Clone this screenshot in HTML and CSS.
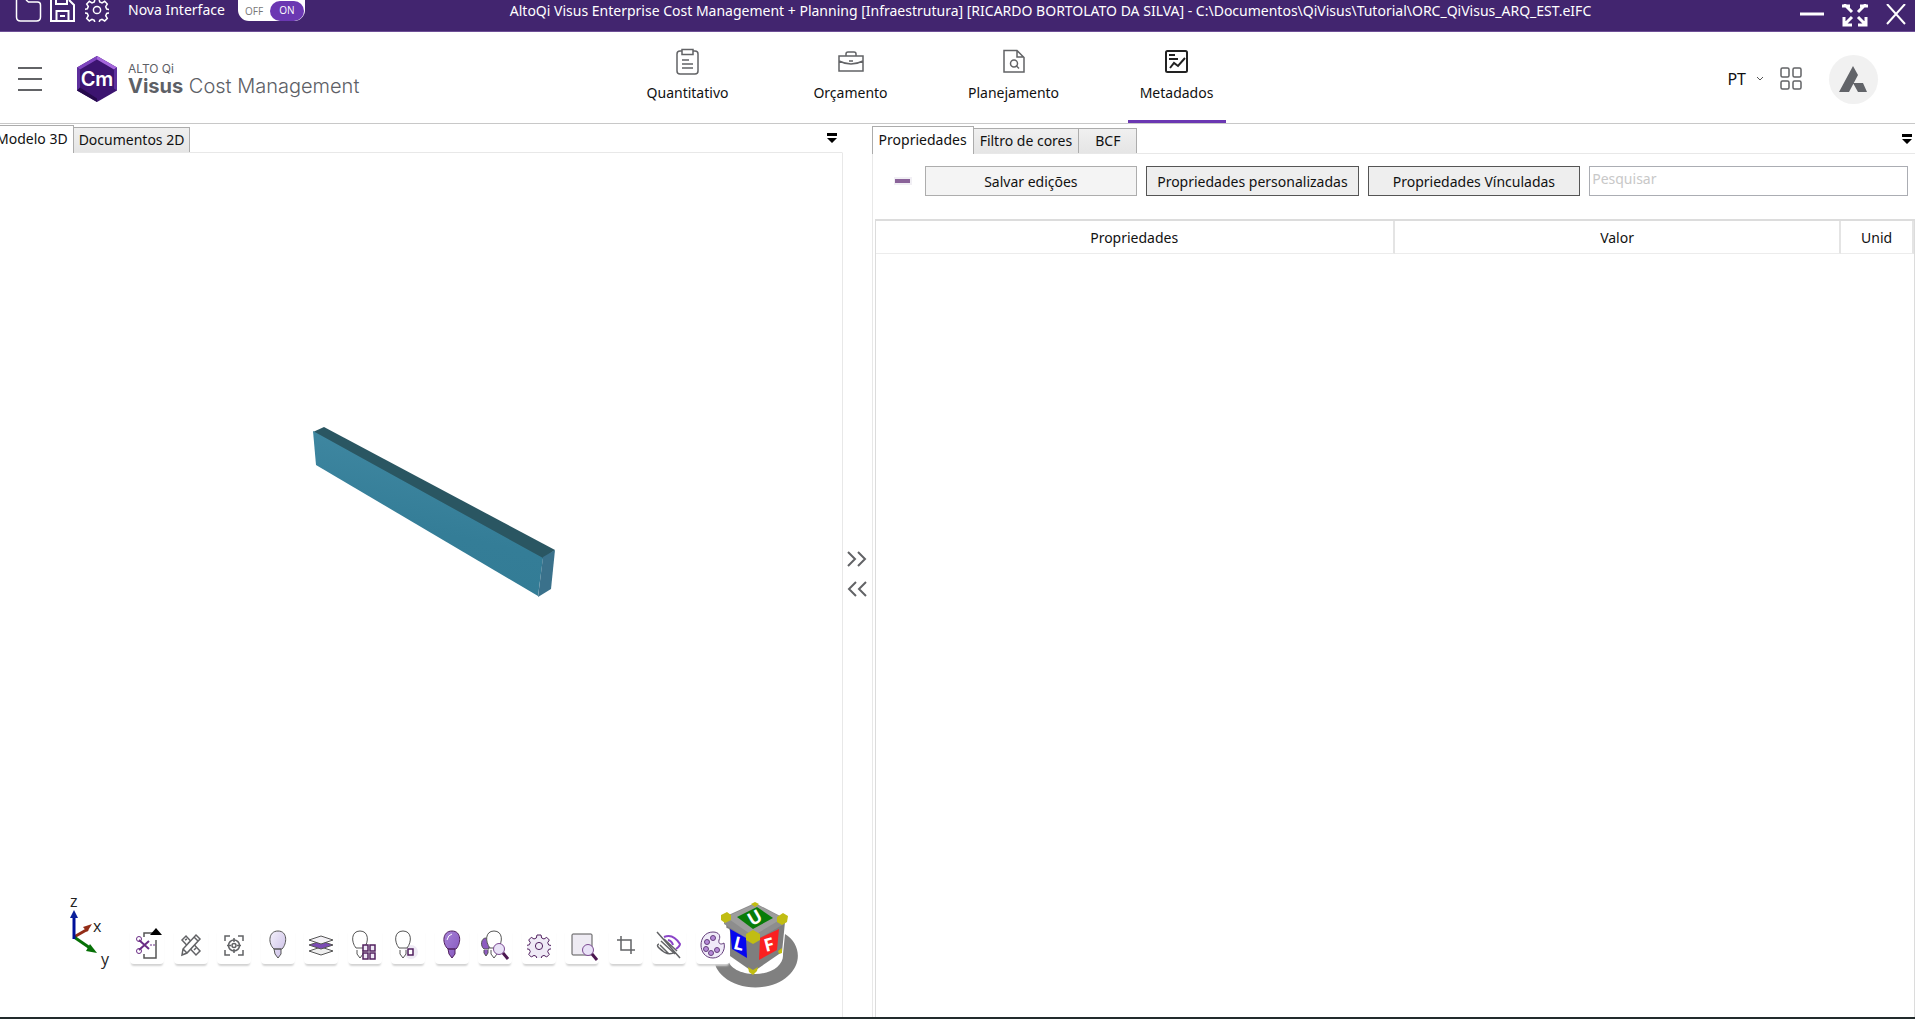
FILE: index.html
```html
<!DOCTYPE html>
<html lang="pt">
<head>
<meta charset="utf-8">
<title>AltoQi Visus Cost Management</title>
<link rel="stylesheet" href="styles.css">
</head>
<body>
<svg class="defs" aria-hidden="true">
  <defs>
    <linearGradient id="lilac" x1="0" y1="0" x2="1" y2="1"><stop offset="0" stop-color="#f4f1fb"/><stop offset="1" stop-color="#c9bce6"/></linearGradient>
    <linearGradient id="violet" x1="0" y1="0" x2="1" y2="1"><stop offset="0" stop-color="#a884d8"/><stop offset="1" stop-color="#8454bd"/></linearGradient>
    <linearGradient id="side" x1="0" y1="1" x2="0.3" y2="0"><stop offset="0" stop-color="#327b94"/><stop offset="0.5" stop-color="#347d97"/><stop offset="1" stop-color="#4088a2"/></linearGradient>
    <symbol id="gear" viewBox="0 0 24 24">
      <path d="M10 1.500h4l.7 3 2.300 1 2.700-1.700 2.600 2.700-1.600 2.700 1 2.300 3 .6v-.2 3.300l-3 .7-1 2.300 1.600 2.700-2.600 2.600-2.700-1.600-2.300 1-.7 3h-4l-.7-3-2.300-1-2.700 1.600-2.600-2.600 1.600-2.700-1-2.300-3-.7v-3.200l3-.7 1-2.300L1.700 6.500l2.600-2.700L7 5.500l2.300-1z"/><circle cx="12" cy="12.500" r="3.600"/>
    </symbol>
    <symbol id="menu" viewBox="0 0 12 11"><path d="M1 0h10v3H1zM1 5h10L6 10z" fill="#000"/></symbol>
  </defs>
</svg>

<header class="titlebar">
  <div class="quick">
    <button class="plain" aria-label="Abrir"><svg width="28" height="24" class="white"><path d="M1.500 0v17q0 4 4 4h16q4 0 4-4V5q0-3-3-3h-9L11 0"/></svg></button>
    <button class="plain" aria-label="Salvar"><svg width="28" height="24" class="white thick"><path d="M1 0v21h23V5l-5-5M6 0v4h11V0M6.500 21v-10h12v10M10 16h5"/></svg></button>
    <button class="plain" aria-label="Opções"><svg width="26" height="24" class="white"><use href="#gear" x="0" y="-3" width="24" height="25"/></svg></button>
    <label class="switch-row" for="nova">Nova Interface</label>
    <span class="switch"><input type="checkbox" id="nova" checked><span class="off">OFF</span><span class="on">ON</span></span>
  </div>
  <div class="title">AltoQi Visus Enterprise Cost Management + Planning [Infraestrutura] [RICARDO BORTOLATO DA SILVA] - C:\Documentos\QiVisus\Tutorial\ORC_QiVisus_ARQ_EST.eIFC</div>
  <div class="window">
    <button class="plain" aria-label="Minimizar"><svg width="24" height="24"><path d="M0 10h24" stroke="#fff" stroke-width="3"/></svg></button>
    <button class="plain" aria-label="Restaurar"><svg width="26" height="24" class="white arrows"><path d="M2 0l8 8M24 0l-8 8M3 20l7-7M23 20l-7-7M0 2h8M26 2h-8M2 13v8h8M24 13v8h-8"/></svg></button>
    <button class="plain" aria-label="Fechar"><svg width="20" height="24" class="white thick"><path d="M1 0l18 20M19 0L1 20"/></svg></button>
  </div>
</header>

<div class="header">
  <div class="brand">
    <button class="plain" aria-label="Menu"><svg width="24" height="26"><path d="M0 2h24M0 13h24M0 24h24" stroke="#626366" stroke-width="2"/></svg></button>
    <div class="hex"><svg width="40" height="46" viewBox="0 0 40 46"><path d="M20 0l20 11.500v23L20 46 0 34.500v-23z" fill="#3c1470"/><path d="M20 0l20 11.500-3 2L20 3.500z" fill="#a566dc"/><path d="M20 0v3.500l-17 10-3-2z" fill="#7f45c0"/><path d="M0 11.500l3 2v19l-3 2z" fill="#5d2f9c"/><path d="M40 11.500l-3 2v19l3 2z" fill="#5d2f9c"/><path d="M0 34.500l3-3 17 11V46z" fill="#260a4c"/></svg><span>Cm</span></div>
    <div class="name"><small>ALTO Qi</small><span><b>Visus</b> Cost Management</span></div>
  </div>
  <nav class="nav">
    <a href="#"><svg width="28" height="28" class="gray fine"><path d="M8 3H6Q3 3 3 6v17q0 3 3 3h15q3 0 3-3V6q0-3-3-3h-2M8 1.500h11v5H8zM8 12h7M8 16h11M8 20h11"/></svg>Quantitativo</a>
    <a href="#"><svg width="28" height="28" class="gray fine"><path d="M2 8h24v15H2zM9 8V6q0-2 2-2h6q2 0 2 2v2M2 13q12 6 24 0M12 13h4"/></svg>Orçamento</a>
    <a href="#"><svg width="28" height="28" class="gray fine"><path d="M4 2.500h13l7 7V24H4zM17 2.500V9h7"/><circle cx="14" cy="15.500" r="3.500"/><path d="M16 17.500l3 3"/></svg>Planejamento</a>
    <a href="#" class="active"><svg width="28" height="28" class="dark"><rect x="3" y="3" width="21" height="21" rx="1.500"/><path d="M6 7h6M6 11h9M7 20l4-5 4 3 7-8"/></svg>Metadados</a>
  </nav>
  <div class="user">
    <button class="plain lang">PT <svg width="8" height="6"><path d="M1 1l3 3 3-3" fill="none" stroke="#555"/></svg></button>
    <button class="plain" aria-label="Aplicativos"><svg width="22" height="24" class="gray fine"><rect x="1" y="1" width="8" height="9" rx="1.500"/><rect x="13" y="1" width="8" height="9" rx="1.500"/><rect x="1" y="14" width="8" height="8" rx="1.500"/><rect x="13" y="14" width="8" height="8" rx="1.500"/></svg></button>
    <button class="plain avatar" aria-label="Conta"><svg width="28" height="26"><path d="M14 0l5 9-9 17H0zM14 17h10l4 9h-9z" fill="#626469"/></svg></button>
  </div>
</div>

<main class="work">
  <section class="left">
    <div class="tabs shifted">
      <button class="tab current">Modelo 3D</button><button class="tab">Documentos 2D</button>
      <button class="plain more" aria-label="Mais"><svg width="12" height="11"><use href="#menu"/></svg></button>
    </div>
    <div class="viewport">
      <svg class="beam" width="245" height="172" viewBox="0 0 245 172">
        <path d="M1 6L12 1l231 123-12 9z" fill="#2a5662"/>
        <path d="M1 5l230 127-5 38L4 39z" fill="url(#side)"/>
        <path d="M231 131l12-7-4 39-13 8z" fill="#3a718b"/>
      </svg>
      <div class="hud">
        <svg class="axis" width="48" height="80" viewBox="0 0 48 80">
          <path d="M8 44l14-8" stroke="#932d17" stroke-width="3"/><path d="M17 34l9-3-5 8z" fill="#932d17"/>
          <path d="M8 44l16 11" stroke="#067006" stroke-width="3"/><path d="M24 51l-4 7 11 2z" fill="#067006"/>
          <path d="M8 46V24" stroke="#00109a" stroke-width="3"/><path d="M8 17l4 8H4z" fill="#0b1f9a"/>
          <text x="4" y="14">z</text><text x="27" y="39">x</text><text x="35" y="72">y</text>
        </svg>
        <div class="tools">
          <button aria-label="Corte"><svg viewBox="0 0 34 36"><g fill="none"><path d="M14 9V5h9M26 12v18H14v-4" stroke="#555" stroke-width="1.500"/><path d="M9 12l10 9M9 22l10-9" stroke="#6b2d86" stroke-width="2"/><circle cx="9" cy="11" r="2.500" stroke="#6b2d86"/><circle cx="9" cy="23" r="2.500" stroke="#6b2d86"/><path d="M20 17h6" stroke="#6b2d86" stroke-dasharray="2 1"/></g><path d="M26 0l6 7H20z" fill="#000"/></svg></button>
          <button aria-label="Medir"><svg viewBox="0 0 34 36" class="gray fine"><path d="M8 12l4-4 14 15-4 4zM11 12l2-1M14 15l2-1M20 22l2-2"/><path d="M22 7l4 4-13 14-5 2 1-6zM20 9l4 4M9 21l4 4" fill="#fff"/></svg></button>
          <button aria-label="Centralizar"><svg viewBox="0 0 34 36" class="gray fine"><path d="M8 13V8h5M21 8h5v5M26 22v5h-5M13 27H8v-5M17 10v4M17 21v4M10 17.500h4M20 17.500h4"/><circle cx="17" cy="17.500" r="5.500"/><circle cx="17" cy="17.500" r="2"/></svg></button>
          <button aria-label="Mostrar"><svg viewBox="0 0 34 36" class="lamp"><path d="M13 21h7v5l-3 4-3-4zM17 3c10 0 9 13 4 18h-8C7 16 7 3 17 3z" fill="url(#lilac)"/></svg></button>
          <button aria-label="Camadas"><svg viewBox="0 0 34 36" class="lamp"><path d="M5 23l12-4 12 4-12 4z" fill="#eee"/><path d="M5 17l12-4 12 4-12 4z" fill="#7b4ab4"/><path d="M5 12l12-4 12 4-12 4z" fill="#f3f1f6"/></svg></button>
          <button aria-label="Mostrar grupo"><svg viewBox="0 0 34 36" class="lamp"><path d="M9 22v4l3 4 3-4v-4M12 3c9 0 9 11 4 17H8C3 14 3 3 12 3z" fill="#fff"/><path d="M15 17h5v6h-5zM22 17h5v6h-5zM15 25h5v6h-5zM22 25h5v6h-5z" fill="#eee7f6" stroke="#51205f" stroke-width="1.500"/></svg></button>
          <button aria-label="Mostrar item"><svg viewBox="0 0 34 36" class="lamp"><circle cx="20" cy="24" r="7" fill="#eeeaf4" stroke="none"/><path d="M9 22v4l3 4 3-4v-4M12 3c9 0 9 11 4 17H8C3 14 3 3 12 3z" fill="#fff"/><path d="M17 21h5v6h-5z" fill="#fff" stroke="#51205f" stroke-width="1.500"/></svg></button>
          <button aria-label="Destacar"><svg viewBox="0 0 34 36" class="lamp plum"><path d="M13 21h7v5l-3 4-3-4zM17 3c10 0 9 13 4 18h-8C7 16 7 3 17 3z" fill="url(#violet)"/><path d="M12 12q1-5 5-6" stroke="#fff"/></svg></button>
          <button aria-label="Localizar"><svg viewBox="0 0 34 36" class="lamp"><path d="M6 22v3l2 3 2-3v-3M8 10c-5 0-6 8-2 11h5V10z" fill="#8d5bc0"/><path d="M13 22v4l3 4 3-4v-4M16 3c9 0 9 11 4 17h-8C7 14 7 3 16 3z" fill="#fff"/><circle cx="21" cy="21" r="5.500" fill="#e9e2f7" stroke="#7b4a92"/><path d="M25 25l5 6" stroke="#4b1750" stroke-width="3"/></svg></button>
          <button aria-label="Configurar"><svg viewBox="0 0 34 36" class="lamp plum pale"><use href="#gear" x="5" y="5" width="24" height="25"/></svg></button>
          <button aria-label="Zoom de área"><svg viewBox="0 0 34 36" class="lamp"><rect x="7" y="6" width="20" height="21" rx="1" fill="#eeebf3"/><circle cx="23" cy="22" r="5.500" fill="#e9e2f7" stroke="#7b4a92"/><path d="M27 26l5 6" stroke="#4b1750" stroke-width="3"/></svg></button>
          <button aria-label="Recortar"><svg viewBox="0 0 34 36" class="gray fine"><path d="M12 8v14h14M8 12h14v14"/></svg></button>
          <button aria-label="Ocultar"><svg viewBox="0 0 34 36" class="gray fine"><path d="M5 4l23 26M7 16q-3 1 0 4 9 9 16 4M9 13l14 13M8 17l9 9M12 11l13 12M6 19l5 4"/><path d="M12 9q9-4 16 7 0 2-4 5M16 12q4 1 5 5" stroke="#8b45c8" stroke-width="2"/></svg></button>
          <button aria-label="Cores"><svg viewBox="0 0 34 36" class="lamp"><path d="M17 4c6 0 8 4 6 8-1 4 2 5 5 3 2 8-4 15-11 15C1 30 1 4 17 4z" fill="#efeaf8" stroke="#65407c"/><g fill="#b58ad8" stroke="#65407c"><circle cx="11" cy="14" r="2.500"/><circle cx="17" cy="10" r="2.500"/><circle cx="10" cy="21" r="2.500"/><circle cx="15" cy="25" r="2.500"/><circle cx="21" cy="22" r="2.500"/></g></svg></button>
        </div>
        <svg class="cube" width="88" height="88" viewBox="0 0 88 88">
          <path d="M73 34C88 43 91 63 76 76 60 91 28 91 12 77 5 71 2 65 2 56l14 3c1 9 13 15 27 15 17 0 29-9 28-20z" fill="#808080"/>
          <path d="M12 18l2 6 4 32 23 16 29-20 3-30-2-4z" fill="#7e7e7e"/>
          <path d="M12 17L43 3l29 15v6L41 42 12 24z" fill="#8d8d8d"/>
          <path d="M14 17L43 4l28 14-30 18z" fill="#9d9d9d"/>
          <path d="M45 7l16 11-20 11-16-12z" fill="#087c08"/>
          <path d="M18 29l16 9 1 20-15-9z" fill="#0606ef"/>
          <path d="M48 38l19-9-2 21-18 10z" fill="#fa2020"/>
          <g class="faces"><text x="43" y="24" transform="rotate(-30 43 18)">U</text><text x="27" y="50" transform="rotate(14 27 44)">L</text><text x="57" y="51" transform="rotate(-14 57 45)">F</text></g>
          <g fill="#c1bd12"><path d="M9 15l6-3 4 3v5l-6 3-4-3zM39 4l4-2 4 2-4 3zM65 17l6-4 5 3-1 6-5 3-5-3zM34 34l7-4 7 4v6l-7 4-7-4zM36 67l5 3 5-3-1 4-4 4-4-3zM66 51l4-3v5l-3 1z"/></g>
        </svg>
      </div>
    </div>
  </section>

  <div class="splitter">
    <button class="plain" aria-label="Expandir"><svg width="20" height="16" class="gray"><path d="M1 1l7 7-7 7M11 1l7 7-7 7"/></svg></button>
    <button class="plain" aria-label="Recolher"><svg width="20" height="16" class="gray"><path d="M9 1L2 8l7 7M19 1l-7 7 7 7"/></svg></button>
  </div>

  <section class="right">
    <div class="tabs">
      <button class="tab current">Propriedades</button><button class="tab">Filtro de cores</button><button class="tab wide">BCF</button>
      <button class="plain more" aria-label="Mais"><svg width="12" height="11"><use href="#menu"/></svg></button>
    </div>
    <div class="panel">
      <div class="actions">
        <button class="plain minus" aria-label="Recolher tudo"><svg width="18" height="8"><path d="M0 0h18v8H0z" fill="#f1eff4"/><path d="M1 4h15" stroke="#8a6399" stroke-width="4"/></svg></button>
        <button class="btn muted">Salvar edições</button>
        <button class="btn">Propriedades personalizadas</button>
        <button class="btn">Propriedades Vínculadas</button>
        <input class="search" type="text" placeholder="Pesquisar" aria-label="Pesquisar">
      </div>
      <div class="grid">
        <table>
          <thead><tr><th class="c-prop">Propriedades</th><th class="c-val">Valor</th><th>Unid</th></tr></thead>
        </table>
      </div>
    </div>
  </section>
</main>
<footer class="edge"></footer>
</body>
</html>
```

FILE: styles.css
```css
* { box-sizing: border-box; }
body {
  margin: 0;
  height: 100vh;
  display: flex;
  flex-direction: column;
  overflow: hidden;
  background: #fff;
  color: #111;
  font: 14px/20px "Noto Sans", "Open Sans", sans-serif;
}
button, input { font: inherit; color: inherit; }
svg { display: block; fill: none; flex: none; }
.defs { position: absolute; width: 0; height: 0; }
.plain { border: 0; padding: 0; background: none; display: block; }
.white { stroke: #fff; stroke-width: 1.5; }
.thick { stroke-width: 2; }
.arrows { stroke-width: 3; }
.gray { stroke: #626366; stroke-width: 2; }
.fine { stroke-width: 1.5; }
.dark { stroke: #222; stroke-width: 2; }

.titlebar {
  flex: none;
  display: flex;
  height: 32px;
  background: #42256f;
  border-bottom: 1px solid #6d4f96;
  color: #fff;
}
.quick { display: flex; align-items: flex-start; padding-left: 15px; }
.quick .plain { width: 35px; }
.switch-row { margin-left: 8px; width: 110px; white-space: nowrap; }
.switch {
  position: relative;
  display: flex;
  align-items: center;
  width: 67px;
  height: 21px;
  background: #fff;
  border-radius: 0 0 11px 11px;
  font: 10px/18px "Open Sans", sans-serif;
}
.switch input { position: absolute; inset: 0; margin: 0; opacity: 0; }
.off { width: 32px; text-align: center; color: #777; }
.on { width: 34px; height: 20px; border-radius: 10px; background: #6b38b2; text-align: center; }
.title { flex: 1; text-align: center; white-space: nowrap; padding: 1px 4px 0 0; }
.window { display: flex; gap: 18px; padding-right: 9px; }

.header {
  flex: none;
  display: flex;
  height: 92px;
  padding-right: 37px;
  border-bottom: 1px solid #c8c8c8;
}
.brand { width: 34%; display: flex; align-items: center; padding: 3px 0 0 18px; }
.hex { position: relative; margin-left: 35px; }
.hex span {
  position: absolute;
  inset: 0;
  color: #fff;
  text-align: center;
  font: 600 20px/46px Inter, sans-serif;
}
.name { margin-left: 11px; color: #5d6066; display: flex; flex-direction: column; font: 300 20px/20px Inter, sans-serif; white-space: nowrap; }
.name small { font-size: 12px; line-height: 14px; font-weight: 400; }
.name b { font-weight: 700; }
.nav { display: flex; gap: 65px; }
.nav a {
  width: 98px;
  display: flex;
  flex-direction: column;
  align-items: center;
  gap: 7px;
  padding-top: 16px;
  color: inherit;
  text-decoration: none;
}
.nav .active { border-bottom: 3px solid #6b38b2; }
.user { margin-left: auto; display: flex; align-items: center; padding-top: 3px; }
.lang { display: flex; align-items: center; gap: 10px; margin-right: 16px; font-size: 16px; }
.avatar {
  width: 49px;
  height: 49px;
  margin-left: 27px;
  padding-left: 10px;
  border-radius: 50%;
  background: #f1f1f1;
}

.work { flex: 1; display: flex; min-height: 0; }
.left { width: 44%; display: flex; flex-direction: column; }
.tabs { display: flex; align-items: flex-end; height: 29px; flex: none; padding-top: 1px; border-bottom: 1px solid #e8e8e8; }
.left .tabs, .viewport { border-right: 1px solid #e8e8e8; }
.left .tabs { border-right-color: transparent; }
.right .tabs { height: 30px; }
.tab {
  height: 25px;
  padding: 0 5px;
  border: 1px solid #acacac;
  border-bottom: 0;
  background: linear-gradient(#f0f0f0, #e5e5e5);
  white-space: nowrap;
}
.tab + .tab { border-left: 0; }
.tab.current { height: 28px; margin-bottom: -1px; background: #fff; padding-bottom: 2px; }
.right .tab { padding-left: 6px; padding-right: 6px; }
.right .wide { padding: 0 16px; }
.shifted .current { margin-left: -10px; }
.more { margin: 0 4px 8px auto; }
.right .more { margin-right: 2px; }
.viewport { position: relative; flex: 1; }
.beam { position: absolute; left: 37%; top: 273px; margin-left: 1px; }
.hud { position: absolute; left: 0; bottom: 29px; display: flex; align-items: flex-end; padding-left: 66px; }
.axis { margin: 0 16px 15px 0; fill: #222; font: 16px "Open Sans", sans-serif; }
.tools { position: relative; z-index: 1; width: 600px; display: flex; justify-content: space-between; margin-bottom: 24px; }
.tools button { width: 34px; height: 36px; padding: 0; border: 0; border-radius: 4px; background: #fff; box-shadow: 0 3px 2px -1px #d2d2d2; }
.lamp { stroke: #555; }
.plum { stroke: #51205f; }
.pale { fill: #efeaf6; }
.cube { margin-left: -18px; }
.faces { fill: #fff; font: 700 18px "Open Sans", sans-serif; text-anchor: middle; }

.splitter { flex: none; width: 29px; display: flex; flex-direction: column; align-items: center; justify-content: center; gap: 14px; padding: 7px 1px 0 0; }
.right { flex: 1; min-width: 0; display: flex; flex-direction: column; }
.panel { flex: 1; display: flex; flex-direction: column; border-left: 1px solid #e8e8e8; padding-left: 2px; }
.actions { display: grid; grid-template-columns: 22px 2fr 2fr 2fr 3fr; gap: 9px; align-items: center; padding: 12px 7px 23px 19px; }
.btn { height: 30px; min-width: 0; padding: 1px 0 0; border: 1px solid #555; background: #eee; white-space: nowrap; }
.muted { border-color: #adadad; background: #f4f4f4; }
.search { height: 30px; width: 100%; min-width: 0; padding: 0 2px 5px; border: 1px solid #abadb3; }
.search::placeholder { color: #c8c8c8; }
.grid { flex: 1; border: 1px solid #dcdcdc; border-top-width: 2px; border-bottom: 0; }
table { width: 100%; table-layout: fixed; border-collapse: separate; border-spacing: 0; }
th { height: 33px; padding: 1px 0 0; font-weight: 400; border-right: 2px solid #e4e4e4; border-bottom: 1px solid #ececec; }
.c-prop { width: 50%; }
.c-val { width: 43%; }
.edge { flex: none; height: 2px; background: #222b2c; }
```
